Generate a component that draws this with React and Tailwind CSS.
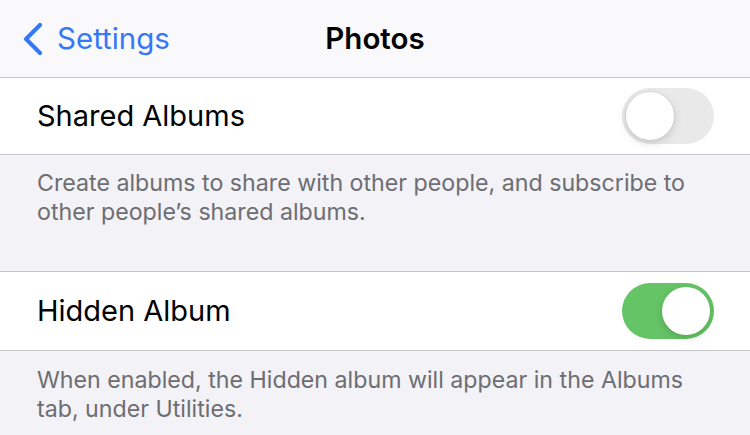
export default function App() {
    const font = { fontFamily: 'Inter, "Noto Sans", sans-serif' }

    return (
        <div className="w-[750px] h-[435px] overflow-hidden bg-[#f2f2f7]" style={font}>
            {/* Nav bar */}
            <div className="relative h-[78px] bg-[#f9f9fb] border-b border-[#c6c6c8] flex items-center">
                <div className="flex items-center pl-[20px] text-[#3478f6]">
                    <svg width="26" height="34" viewBox="0 0 26 34" fill="none">
                        <path d="M20 3 L6 17 L20 31" stroke="#3478f6" strokeWidth="4.2" strokeLinecap="round" strokeLinejoin="round" />
                    </svg>
                    <span className="ml-[11px] text-[29.5px] leading-none">Settings</span>
                </div>
                <div className="absolute left-0 right-0 text-center text-[29.5px] font-semibold text-black leading-none pointer-events-none">
                    Photos
                </div>
            </div>

            {/* Shared Albums */}
            <div className="h-[77px] bg-white border-b border-[#c6c6c8] flex items-center justify-between pl-[37px] pr-[36px]">
                <span className="text-[29px] text-black">Shared Albums</span>
                <div className="w-[92px] h-[56px] rounded-full bg-[#e9e9ea] p-[4px] flex justify-start">
                    <div className="w-[48px] h-[48px] rounded-full bg-white shadow-[0_3px_8px_rgba(0,0,0,0.15),0_0_0_1px_rgba(0,0,0,0.04)]" />
                </div>
            </div>
            <div className="h-[116px] pl-[37px] pr-[24px] pt-[14px] text-[23.2px] leading-[29px] text-[#6d6d72]">
                Create albums to share with other people, and subscribe to other people’s shared albums.
            </div>

            {/* Hidden Album */}
            <div className="h-[80px] bg-white border-y border-[#c6c6c8] flex items-center justify-between pl-[37px] pr-[36px]">
                <span className="text-[29px] text-black">Hidden Album</span>
                <div className="w-[92px] h-[56px] rounded-full bg-[#65c466] p-[4px] flex justify-end">
                    <div className="w-[48px] h-[48px] rounded-full bg-white shadow-[0_3px_8px_rgba(0,0,0,0.15)]" />
                </div>
            </div>
            <div className="pl-[37px] pr-[24px] pt-[15px] text-[23.2px] leading-[29px] text-[#6d6d72]">
                When enabled, the Hidden album will appear in the Albums tab, under Utilities.
            </div>
        </div>
    )
}
